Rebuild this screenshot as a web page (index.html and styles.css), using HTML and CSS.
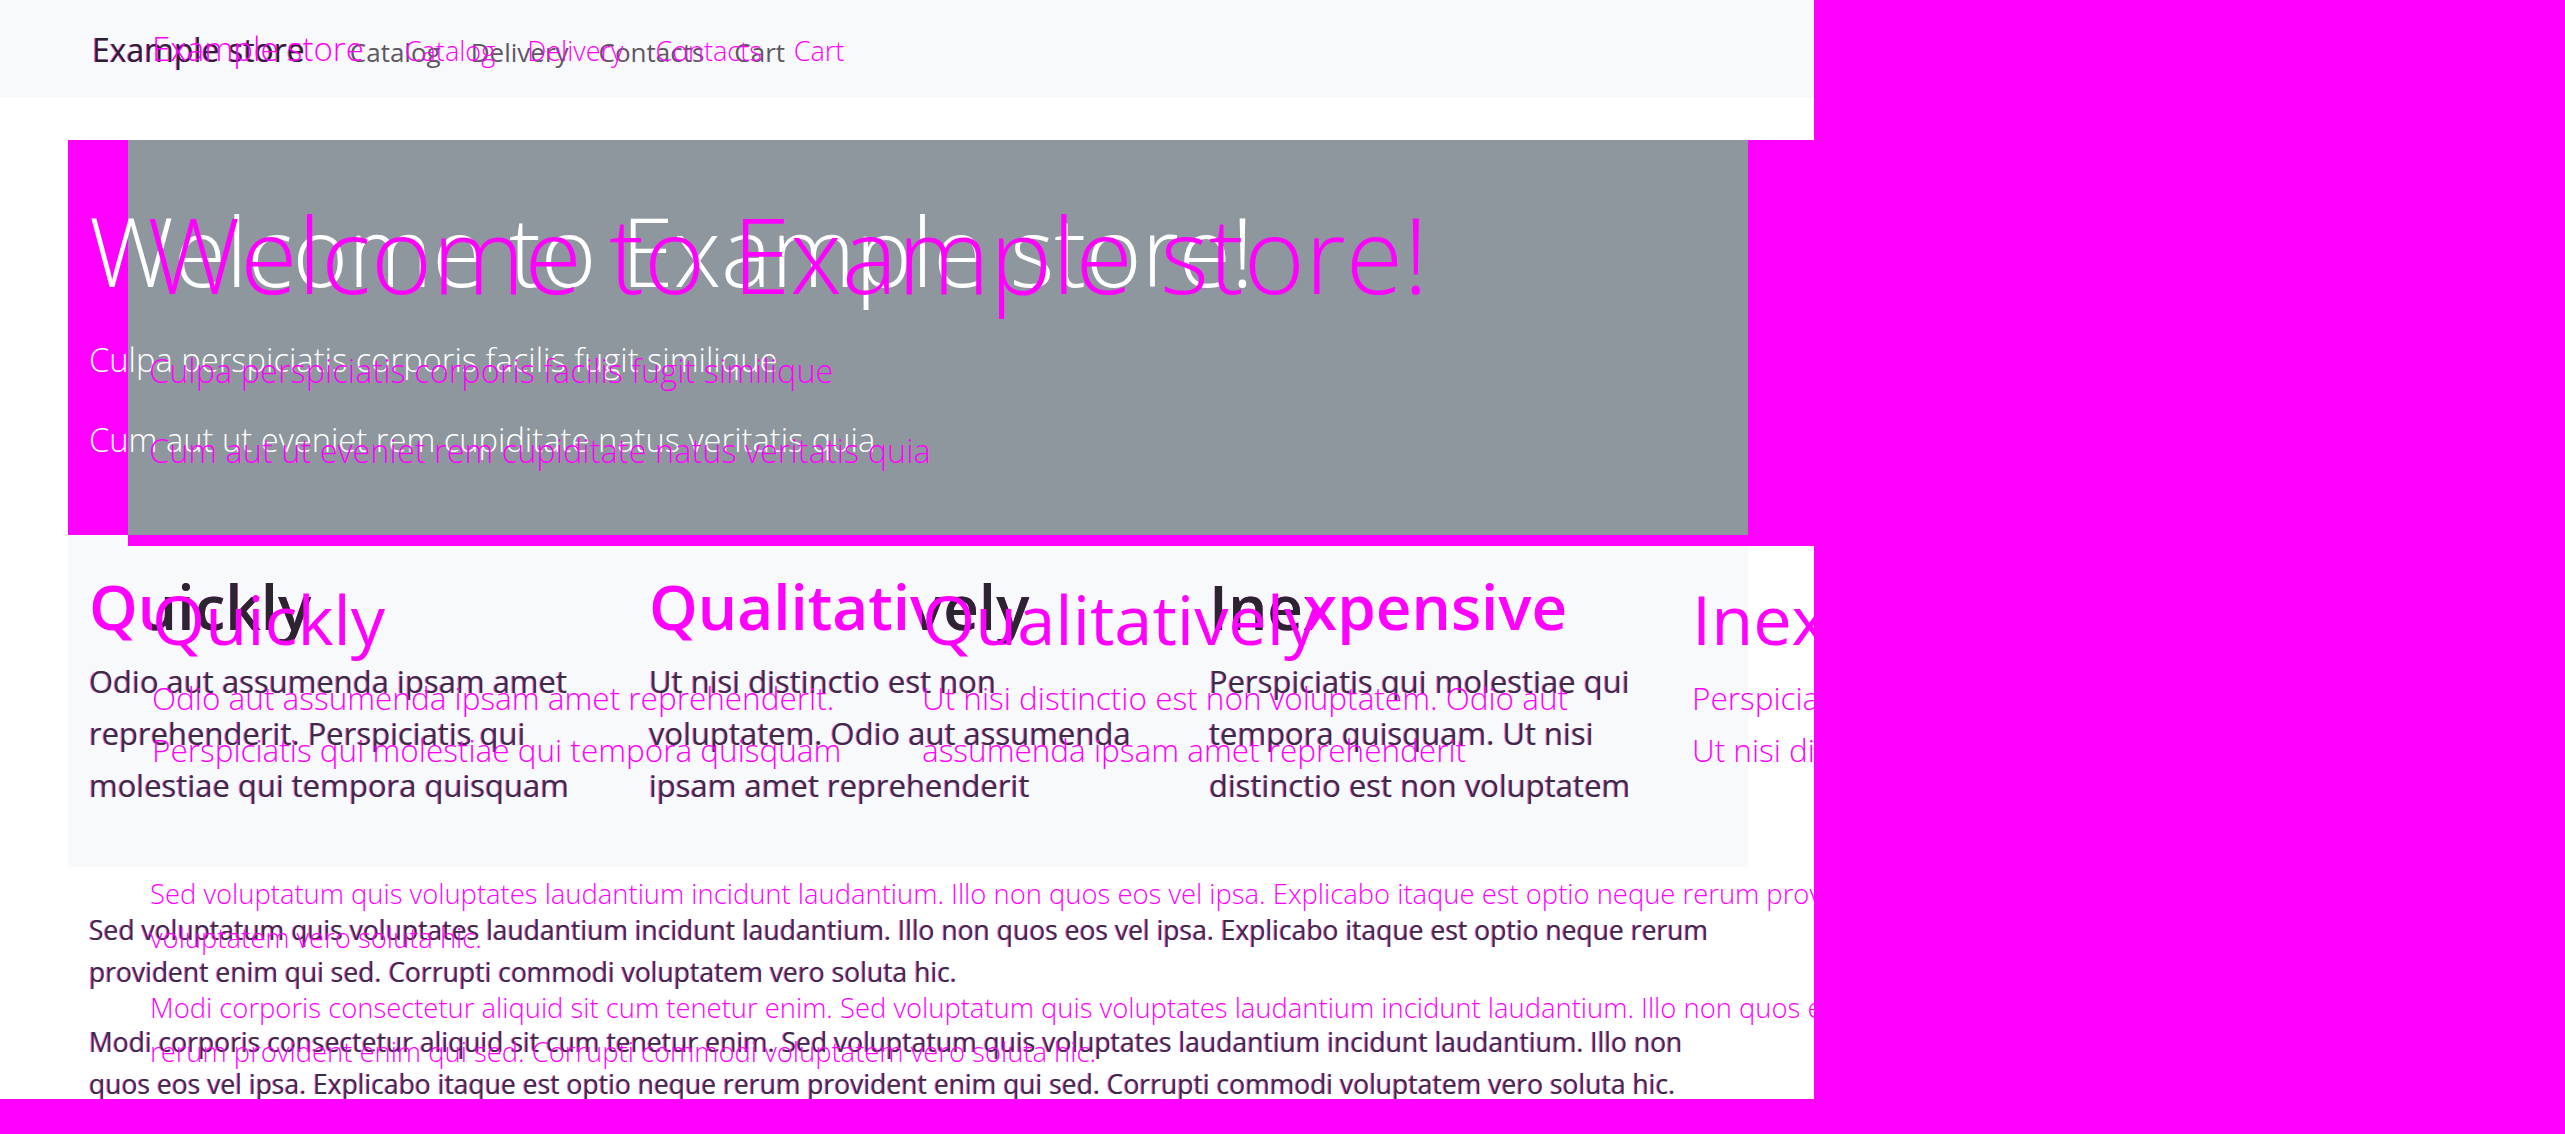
FILE: index.html
```html
<!DOCTYPE html>
<html lang="en">
<head>
<meta charset="utf-8">
<title>Example store</title>
<link rel="stylesheet" href="styles.css">
</head>
<body>
<div class="page">
  <div class="site">
    <nav class="navbar">
      <a class="brand" href="#">Example store</a>
      <ul class="nav">
        <li><a href="#">Catalog</a></li>
        <li><a href="#">Delivery</a></li>
        <li><a href="#">Contacts</a></li>
        <li><a href="#">Cart</a></li>
      </ul>
    </nav>
    <section class="hero">
      <h1>Welcome to Example store!</h1>
      <p class="lead">Culpa perspiciatis corporis facilis fugit similique</p>
      <p class="lead">Cum aut ut eveniet rem cupiditate natus veritatis quia</p>
    </section>
    <section class="features">
      <div class="feature">
        <h2 class="hl hl-a" data-label="Quickly">Quickly</h2>
        <p>Odio aut assumenda ipsam amet reprehenderit. Perspiciatis qui molestiae qui tempora quisquam</p>
      </div>
      <div class="feature">
        <h2 class="hl hl-b" data-label="Qualitatively">Qualitatively</h2>
        <p>Ut nisi distinctio est non voluptatem. Odio aut assumenda ipsam amet reprehenderit</p>
      </div>
      <div class="feature">
        <h2 class="hl hl-c" data-label="Inexpensive">Inexpensive</h2>
        <p>Perspiciatis qui molestiae qui tempora quisquam. Ut nisi distinctio est non voluptatem</p>
      </div>
    </section>
    <section class="text">
      <p>Sed voluptatum quis voluptates laudantium incidunt laudantium. Illo non quos eos vel ipsa. Explicabo itaque est optio neque rerum provident enim qui sed. Corrupti commodi voluptatem vero soluta hic.</p>
      <p>Modi corporis consectetur aliquid sit cum tenetur enim. Sed voluptatum quis voluptates laudantium incidunt laudantium. Illo non quos eos vel ipsa. Explicabo itaque est optio neque rerum provident enim qui sed. Corrupti commodi voluptatem vero soluta hic.</p>
    </section>
  </div>

  <div class="ghost" aria-hidden="true">
    <div class="ghost-nav">
      <span class="ghost-brand">Example store</span>
      <span class="ghost-link">Catalog</span>
      <span class="ghost-link">Delivery</span>
      <span class="ghost-link">Contacts</span>
      <span class="ghost-link">Cart</span>
    </div>
    <div class="ghost-hero">
      <div class="ghost-title">Welcome to Example store!</div>
      <div class="ghost-lead">Culpa perspiciatis corporis facilis fugit similique</div>
      <div class="ghost-lead">Cum aut ut eveniet rem cupiditate natus veritatis quia</div>
    </div>
    <div class="ghost-features">
      <div class="ghost-col">
        <div class="ghost-head">Quickly</div>
        <div class="ghost-para"><span class="ln">Odio aut assumenda ipsam amet reprehenderit.</span><span class="ln">Perspiciatis qui molestiae qui tempora quisquam</span></div>
      </div>
      <div class="ghost-col">
        <div class="ghost-head">Qualitatively</div>
        <div class="ghost-para"><span class="ln">Ut nisi distinctio est non voluptatem. Odio aut</span><span class="ln">assumenda ipsam amet reprehenderit</span></div>
      </div>
      <div class="ghost-col">
        <div class="ghost-head">Inexpensive</div>
        <div class="ghost-para"><span class="ln">Perspiciatis qui molestiae qui tempora quisquam.</span><span class="ln">Ut nisi distinctio est non voluptatem</span></div>
      </div>
    </div>
    <div class="ghost-text">
      <div class="ghost-p"><span class="ln">Sed voluptatum quis voluptates laudantium incidunt laudantium. Illo non quos eos vel ipsa. Explicabo itaque est optio neque rerum provident enim qui sed. Corrupti commodi</span><span class="ln">voluptatem vero soluta hic.</span></div>
      <div class="ghost-p"><span class="ln">Modi corporis consectetur aliquid sit cum tenetur enim. Sed voluptatum quis voluptates laudantium incidunt laudantium. Illo non quos eos vel ipsa. Explicabo itaque est optio neque</span><span class="ln">rerum provident enim qui sed. Corrupti commodi voluptatem vero soluta hic.</span></div>
    </div>
  </div>
</div>
</body>
</html>
```
FILE: styles.css
```css
html, body {
  margin: 0;
  width: 2565px;
  height: 1134px;
  overflow: hidden;
}

body {
  background: #ff00ff;
  font-family: "Open Sans", "Noto Sans", sans-serif;
}

.page {
  position: relative;
  width: 2565px;
  height: 1134px;
}

/* ---------- base page ---------- */
.site {
  width: 1814px;
  height: 1099px;
  background: #fff;
  overflow: hidden;
  color: #212529;
}

.navbar {
  height: 98px;
  box-sizing: border-box;
  background: #f8f9fa;
  display: flex;
  align-items: baseline;
  padding: 26px 0 0 92px;
}

.brand {
  font-size: 32px;
  line-height: 48px;
  color: #2a2030;
  text-decoration: none;
  margin-right: 30px;
  text-shadow: -1px 0 rgba(255, 0, 255, 0.6);
}

.nav {
  display: flex;
  list-style: none;
  margin: 0;
  padding: 0;
}

.nav a {
  display: block;
  padding: 0 15px;
  font-size: 26px;
  line-height: 40px;
  color: #5e5663;
  text-decoration: none;
}

.hero {
  margin: 42px 0 0 68px;
  width: 1746px;
  height: 406px;
  box-sizing: border-box;
  padding: 55px 0 0 21px;
  color: #fff;
  background:
    linear-gradient(#f8f9fa, #f8f9fa) 0 395px / 60px 11px no-repeat,
    linear-gradient(#8f979e, #8f979e) 60px 0 / 1620px 395px no-repeat,
    #ff00ff;
}

.hero h1 {
  margin: 0 0 30px;
  font-size: 95px;
  font-weight: 300;
  line-height: 110px;
  white-space: nowrap;
}

.lead {
  margin: 0 0 31px;
  font-size: 32.7px;
  font-weight: 300;
  line-height: 49px;
  white-space: nowrap;
}

.features {
  margin-left: 68px;
  width: 1680px;
  height: 321px;
  background: #f8f9fa;
  display: grid;
  grid-template-columns: repeat(3, 1fr);
}

.feature {
  padding: 23px 34px 0 21px;
}

.feature h2 {
  margin: 0 0 12px;
  font-size: 62px;
  font-weight: 600;
  line-height: 74px;
  color: #ff00ff;
  white-space: nowrap;
}

.hl {
  position: relative;
}

.hl::after {
  content: attr(data-label);
  position: absolute;
  left: 0;
  top: 0;
  color: #2b2530;
}

.hl-a::after { clip-path: inset(0 0 0 63px); }
.hl-b::after { clip-path: inset(0 0 0 273px); }
.hl-c::after { clip-path: inset(0 calc(100% - 97px) 0 0); }

.feature p {
  margin: 0;
  font-size: 31px;
  line-height: 52px;
  color: #3a2c42;
  text-shadow: -1px 0 rgba(255, 0, 255, 0.55);
}

.text {
  margin: 42px 0 0 89px;
  width: 1630px;
}

.text p {
  margin: 0 0 28px;
  font-size: 26.5px;
  line-height: 42px;
  color: #3a2c42;
  text-shadow: -1px 0 rgba(255, 0, 255, 0.6);
}

/* ---------- magenta overlay (second rendering) ---------- */
.ghost {
  position: absolute;
  inset: 0;
  color: #ff00ff;
  font-weight: 300;
  pointer-events: none;
}

.ln {
  display: block;
  white-space: nowrap;
}

.ghost-nav {
  height: 98px;
  box-sizing: border-box;
  display: flex;
  align-items: baseline;
  padding: 25px 0 0 152px;
}

.ghost-brand {
  font-size: 33px;
  line-height: 48px;
  margin-right: 41px;
}

.ghost-link {
  font-size: 27px;
  line-height: 40px;
  margin-right: 32px;
}

.ghost-hero {
  height: 448px;
  box-sizing: border-box;
  padding: 94px 0 0 147px;
}

.ghost-title {
  font-size: 104.5px;
  line-height: 124px;
  margin-bottom: 30px;
  white-space: nowrap;
}

.ghost-lead {
  font-size: 32.5px;
  line-height: 49px;
  margin: 0 0 31px 2px;
  white-space: nowrap;
}

.ghost-features {
  height: 321px;
  box-sizing: border-box;
  padding: 33px 0 0 152px;
  display: grid;
  grid-template-columns: repeat(3, 770px);
}

.ghost-head {
  font-size: 68.5px;
  font-weight: 400;
  line-height: 80px;
  margin-bottom: 13px;
  white-space: nowrap;
}

.ghost-para {
  font-size: 31.5px;
  line-height: 52px;
}

.ghost-text {
  padding: 5px 0 0 150px;
}

.ghost-p {
  font-size: 27.4px;
  line-height: 44px;
  margin-bottom: 26px;
}
```
